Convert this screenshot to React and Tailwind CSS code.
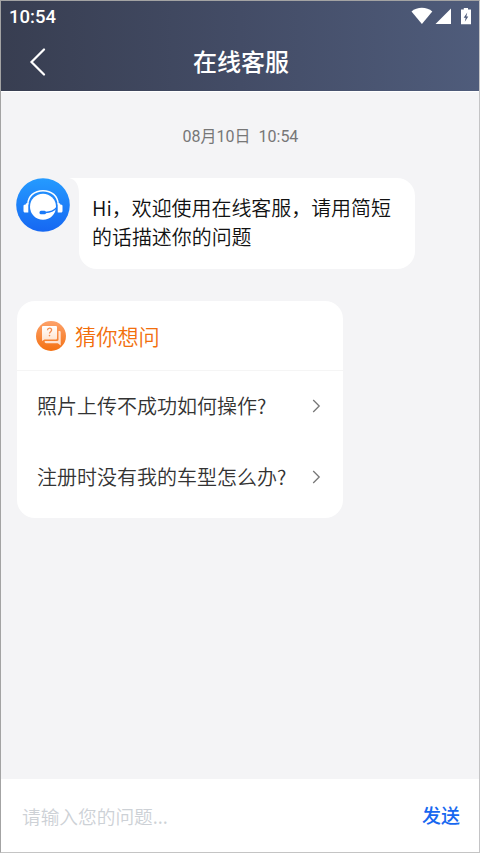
import React, { useState } from "react";

const questions = ["照片上传不成功如何操作?", "注册时没有我的车型怎么办?"];

const StatusIcons = () => (
  <svg width="62" height="20" viewBox="0 0 62 20" fill="#fff">
    <path d="M0.5 4.5C6-0.4 15.800-0.4 21.300 4.500L10.900 17Z" />
    <path d="M40 1.500V17H24.500Z" />
    <path d="M52.800 1H57v1.600h3V17.200H50V2.600h2.800Z" />
    <path d="M56.300 5.500l-3.600 5.200h2l-.9 4 3.500-5.300h-2Z" fill="#4d5a79" />
  </svg>
);

const Chevron = () => (
  <svg width="9" height="14" viewBox="0 0 9 14" fill="none">
    <path d="M1.200 1l6 6-6 6" stroke="#777" strokeWidth="1.300" />
  </svg>
);

const AgentAvatar = () => (
  <svg width="54" height="54" viewBox="0 0 54 54" className="shrink-0">
    <defs>
      <linearGradient id="avatar" x1="0" y1="0" x2="0" y2="1">
        <stop offset="0" stopColor="#259bff" />
        <stop offset="1" stopColor="#1667f2" />
      </linearGradient>
    </defs>
    <circle cx="27" cy="27" r="26.800" fill="url(#avatar)" />
    <circle cx="27" cy="28.700" r="13" fill="#fff" />
    <path
      d="M11.800 26.500C12 18 18.500 12.700 27 12.700S42 18 42.200 26.500"
      fill="none"
      stroke="#fff"
      strokeWidth="1.500"
    />
    <path d="M12.300 25v9.500H9c-1 0-1.500-.7-1.500-1.500v-5c0-.8.5-1.200 1.200-1.200h.8c0-1.300.8-1.800 2.800-1.800Z" fill="#fff" />
    <path d="M41.700 25v9.500H45c1 0 1.500-.7 1.500-1.500v-5c0-.8-.5-1.200-1.200-1.200h-.8c0-1.300-.8-1.800-2.800-1.800Z" fill="#fff" />
    <path
      d="M40.800 29.500C38 32.800 34 34.300 29.500 34.500"
      fill="none"
      stroke="#1b7af8"
      strokeWidth="1.300"
    />
    <rect x="23.500" y="32.700" width="6.500" height="3.600" rx="1.500" fill="#1b7af8" />
  </svg>
);

const GuessIcon = () => (
  <svg width="30" height="30" viewBox="0 0 30 30">
    <defs>
      <linearGradient id="guess" x1="0" y1="0" x2="0" y2="1">
        <stop offset="0" stopColor="#fda26b" />
        <stop offset="1" stopColor="#f47011" />
      </linearGradient>
      <linearGradient id="sheet" x1="0" y1="0" x2="0" y2="1">
        <stop offset="0" stopColor="#fff" />
        <stop offset="1" stopColor="#ffe2cc" />
      </linearGradient>
    </defs>
    <circle cx="15" cy="15" r="15" fill="url(#guess)" />
    <path d="M22.500 10h1c.7 0 1.200.5 1.200 1.200V24.500l-2.900-2.200H10c-.8 0-1.300-.5-1.300-1.200V20h12.500c.8 0 1.300-.5 1.300-1.200Z" fill="#ffe2d0" />
    <path d="M7.300 5h12.400c.8 0 1.300.5 1.300 1.300v11c0 .8-.5 1.300-1.300 1.300H8.500L6 20V6.300C6 5.500 6.500 5 7.300 5Z" fill="url(#sheet)" />
    <path
      d="M11.500 9.200c.1-1.300.8-2 2-2 1.300 0 2.100.7 2.100 1.900 0 1.500-2.100 1.800-2.100 3.500"
      fill="none"
      stroke="#f28a4c"
      strokeWidth="1.300"
    />
    <circle cx="13.500" cy="14.600" r=".8" fill="#f28a4c" />
  </svg>
);

const App = () => {
  const [message, setMessage] = useState("");

  return (
    <div className="flex h-[853px] w-[480px] flex-col overflow-hidden border border-[#a3a3a3] border-b-[#c4c4c4] border-r-[#c4c4c6] bg-[#f4f4f6] font-['Noto_Sans_CJK_SC',sans-serif]">
      <header className="h-[90px] shrink-0 bg-linear-to-r from-[#383e51] via-[#434c66] to-[#4f5c7b] text-white">
        <div className="flex h-8 items-center justify-between pl-2 pr-[6px] font-['Roboto',sans-serif] text-[18.5px] font-medium">
          <span className="pt-0.5">10:54</span>
          <StatusIcons />
        </div>
        <div className="grid h-[58px] grid-cols-[60px_1fr_60px] items-center">
          <button className="pl-[28px]" aria-label="返回">
            <svg width="17" height="28" viewBox="0 0 17 28" fill="none">
              <path d="M15 1.500L2.500 14 15 26.500" stroke="#fff" strokeWidth="2.200" strokeLinecap="round" />
            </svg>
          </button>
          <h1 className="pb-0.5 pl-0.5 text-center text-2xl font-medium">在线客服</h1>
        </div>
      </header>

      <main className="flex-1 border-t border-white px-[15px]">
        <p className="mt-[33px] pl-px text-center font-['Roboto','Noto_Sans_CJK_SC',sans-serif] text-base leading-6 whitespace-pre text-[#777]">
          08月10日  10:54
        </p>

        <div className="mt-[29px] flex items-start">
          <AgentAvatar />
          <div className="relative ml-[9px] h-[91px] w-[336px] rounded-[18px] rounded-tl-none bg-white pl-[13px] pt-[15px] text-[19.95px] leading-[29px] font-[350] text-[#111]">
            <svg className="absolute -left-[10px] top-0" width="10" height="16" viewBox="0 0 10 16">
              <path d="M0 0h10v16C10 7 7 1.500 0 0Z" fill="#fff" />
            </svg>
            Hi，欢迎使用在线客服，请用简短
            <br />
            的话描述你的问题
          </div>
        </div>

        <section className="mt-8 ml-px h-[217px] w-[326px] rounded-[18px] bg-white">
          <div className="flex h-[70px] items-center gap-[9px] border-b border-[#f5f5f5] pl-[19px] text-[21.2px] font-[350] text-[#f26f0d]">
            <GuessIcon />
            <h2 className="pt-px">猜你想问</h2>
          </div>
          {questions.map((question) => (
            <button
              key={question}
              className="flex h-[71px] w-full items-center justify-between pb-0.5 pl-5 pr-[22px] text-xl font-[350] text-[#333]"
            >
              <span>{question}</span>
              <Chevron />
            </button>
          ))}
        </section>
      </main>

      <footer className="flex h-[73px] shrink-0 items-center justify-between bg-white pl-[21px] pr-[19px]">
        <input
          className="w-[300px] pt-px text-[18.7px] font-[350] outline-none placeholder:text-[#cdd1d6]"
          placeholder="请输入您的问题..."
          value={message}
          onChange={(e) => setMessage(e.target.value)}
        />
        <button className="text-[19px] font-medium text-[#1768f0]">发送</button>
      </footer>
    </div>
  );
};

export default App;
